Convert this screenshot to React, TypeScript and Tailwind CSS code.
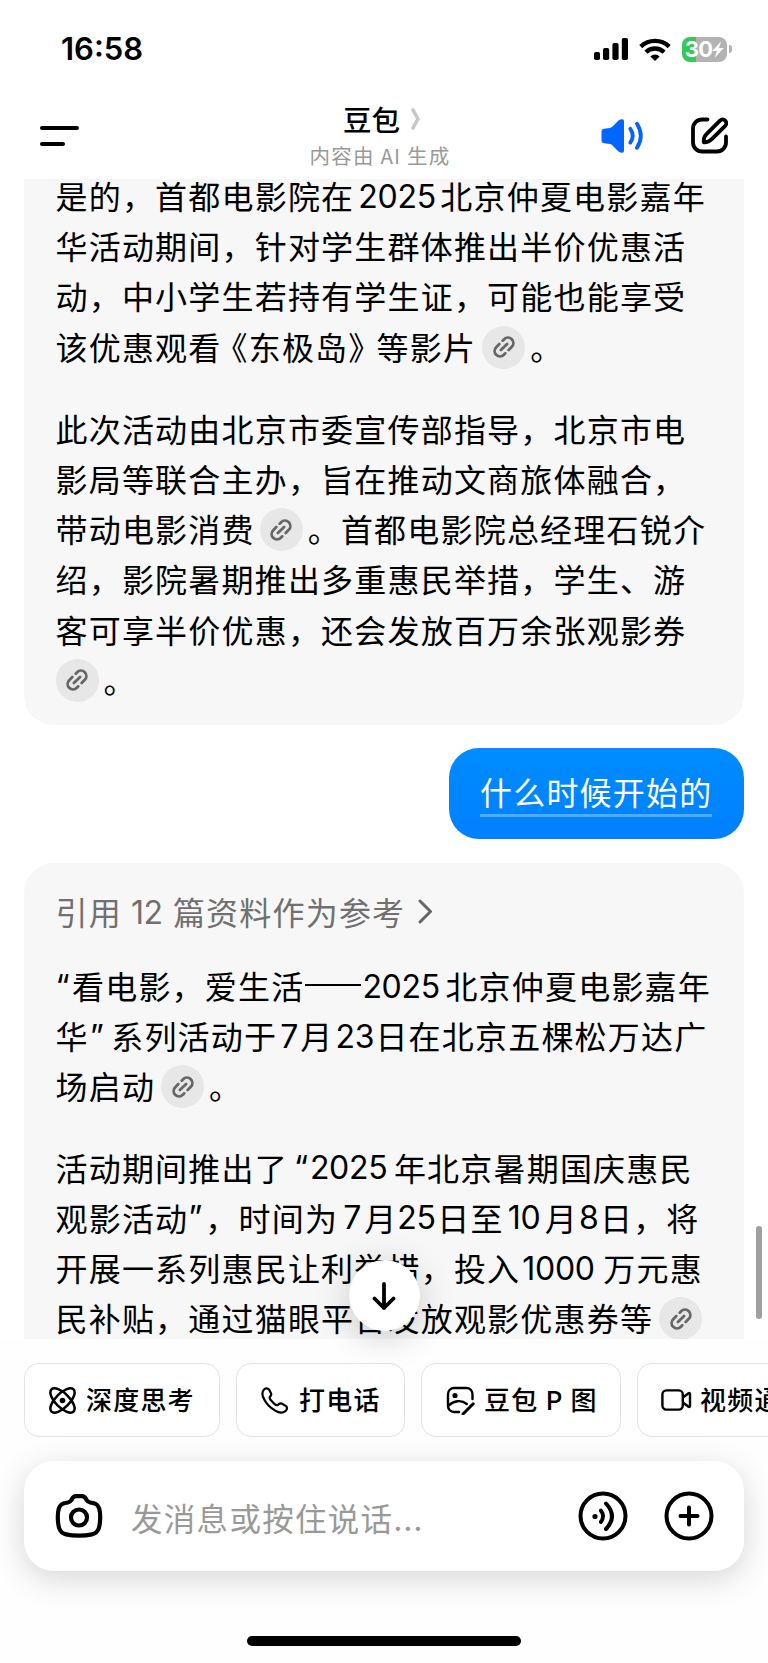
import React from 'react';

const LinkBadge: React.FC<{ className?: string }> = ({ className = '' }) => (
  <span className={`mt-[3px] inline-flex h-[43px] w-[43px] shrink-0 items-center justify-center rounded-full bg-[#e7e7e7] ${className}`}>
    <svg width="26" height="26" viewBox="-13 -13 26 26" fill="none" stroke="#666" strokeWidth="2.8" strokeLinecap="round">
      <g transform="rotate(-45)">
        <path d="M-3.6 5.4H-5.600A5.4 5.4 0 0 1 -5.600 -5.4H-1.2" />
        <path d="M3.6 -5.4H5.600A5.4 5.4 0 0 1 5.600 5.4H1.2" />
        <path d="M-4.4 0H4.4" />
      </g>
    </svg>
  </span>
);

const Num: React.FC<{ className: string; children: React.ReactNode }> = ({ className, children }) => (
  <span className={`mt-[3px] flex shrink-0 font-['Inter'] text-[32px] tracking-[-0.3px] ${className}`}>{children}</span>
);

const Line: React.FC<{ children: React.ReactNode }> = ({ children }) => (
  <div className="flex h-[50.2px] items-center whitespace-nowrap">{children}</div>
);

const Signal = () => (
  <svg width="34" height="22" viewBox="0 0 34 22">
    <rect x="0" y="14" width="6" height="8" rx="1.8" />
    <rect x="9" y="10" width="6.2" height="12" rx="1.8" />
    <rect x="18.4" y="5" width="6.2" height="17" rx="1.8" />
    <rect x="27.8" y="0" width="6.2" height="22" rx="1.8" />
  </svg>
);

const Wifi = () => (
  <svg width="32" height="23" viewBox="0 0 32 23" fill="none" stroke="#000" strokeWidth="4.4">
    <path d="M1.800 8.600a20.500 20.500 0 0 1 28.400 0" />
    <path d="M6.9 14.2a13.2 13.2 0 0 1 18.2 0" />
    <path d="M16 23l-4.6-4.6a6.6 6.6 0 0 1 9.2 0z" fill="#000" stroke="none" />
  </svg>
);

const Battery = () => (
  <div className="flex items-center gap-[2px]">
    <div className="flex h-[25px] w-[45px] items-center justify-center overflow-hidden rounded-[8px] bg-[linear-gradient(90deg,#34c759_31%,#b3b3b3_31%)] text-white">
      <span className="font-['Inter'] text-[22px] leading-none font-bold tracking-[-0.8px]">30</span>
      <svg width="12" height="17" viewBox="0 0 12 17" fill="#fff">
        <path d="M9.200 0.200L0.300 10H5L2.800 16.800L11.700 7H7z" />
      </svg>
    </div>
    <span className="h-[8px] w-[3px] rounded-r-full bg-[#b3b3b3]" />
  </div>
);

const ThinkIcon = () => (
  <svg width="27" height="27" viewBox="0 0 27 27" fill="none" stroke="#000" strokeWidth="2.5">
    <ellipse cx="13.5" cy="13.5" rx="15.600" ry="7" transform="rotate(45 13.5 13.5)" />
    <ellipse cx="13.5" cy="13.5" rx="15.600" ry="7" transform="rotate(-45 13.5 13.5)" />
    <circle cx="13.5" cy="13.5" r="2.8" fill="#000" stroke="none" />
  </svg>
);

const PhoneIcon = () => (
  <svg width="27" height="27" viewBox="0 0 27 27" fill="none" stroke="#000" strokeWidth="2.2" strokeLinejoin="round">
    <path d="M2.7 2.9C4.3 0.8 7 1 8.3 3L10 6.2c.8 1.6-.2 2.6-1 3.6-.7.9-.4 1.7.5 3l4.2 4.4c1.2 1 2.2 1.3 3.2.6l1.6-1.1c.8-.5 1.7-.4 2.6.1l3.6 2.1c2 1.3 1.5 3.8-.3 5.2-2.3 1.8-5.7 2.3-10.2-.5-5-3-8.7-6.6-11.2-11.7C1 8.300.8 5.300 2.7 2.9z" />
  </svg>
);

const PhotoIcon = () => (
  <svg width="29" height="29" viewBox="0 0 29 29" fill="none" stroke="#000" strokeWidth="2.4" strokeLinecap="round" strokeLinejoin="round">
    <path d="M13 26H8a6 6 0 0 1-6-6V8a6 6 0 0 1 6-6h12.500a6 6 0 0 1 6 6v5" />
    <path d="M2.300 20c5.500-5.500 13-6.500 18.500-2" />
    <circle cx="9" cy="9.500" r="2.600" fill="#000" stroke="none" />
    <path d="M27.200 17.800L17 28" strokeWidth="3" />
  </svg>
);

const VideoIcon = () => (
  <svg width="31" height="22" viewBox="0 0 31 22" fill="none" stroke="#000" strokeWidth="2.4" strokeLinejoin="round">
    <rect x="1.4" y="1.400" width="20.400" height="19.200" rx="4" />
    <path d="M22 8.500L27.500 4.300Q29 3.400 29 5v12q0 1.600-1.500.7L22 13.500" />
  </svg>
);

const chips = [
  { label: '深度思考', icon: <ThinkIcon />, box: 'w-[196px] pl-[24px]', gap: 'ml-[10px]' },
  { label: '打电话', icon: <PhoneIcon />, box: 'w-[169px] pl-[24px]', gap: 'ml-[11px]' },
  { label: '豆包 P 图', icon: <PhotoIcon />, box: 'w-[200px] pl-[24px]', gap: 'ml-[9px]' },
  { label: '视频通话', icon: <VideoIcon />, box: 'w-[196px] pl-[23px]', gap: 'ml-[8px]' },
];

const App: React.FC = () => {
  return (
    <div className="relative flex h-[1663px] w-[768px] flex-col overflow-hidden bg-white font-['Noto_Sans_CJK_SC',sans-serif] text-black">
      <div className="flex h-[98px] shrink-0 items-center justify-between pr-[36px] pl-[61px]">
        <span className="font-['Inter'] text-[31px] font-semibold">16:58</span>
        <div className="flex items-center gap-[11px]">
          <Signal />
          <Wifi />
          <Battery />
        </div>
      </div>

      <header className="grid h-[81px] shrink-0 grid-cols-[200px_1fr_200px]">
        <div className="flex flex-col gap-[12px] pt-[28px] pl-[40px]">
          <span className="h-[4px] w-[39px] rounded-full bg-black" />
          <span className="h-[4px] w-[25px] rounded-full bg-black" />
        </div>
        <div className="flex flex-col items-center pr-[8px]">
          <div className="flex h-[42px] items-center gap-[11px] pl-[3px]">
            <span className="text-[28.500px] leading-none font-medium">豆包</span>
            <svg width="9" height="22" viewBox="0 0 9 22" fill="none" stroke="#c8c8c8" strokeWidth="3.600" strokeLinecap="round" strokeLinejoin="round">
              <path d="M2 2l5 9-5 9" />
            </svg>
          </div>
          <span className="mt-[5px] text-[20.500px] leading-[20px] tracking-[1.2px] text-[#999]">内容由 AI 生成</span>
        </div>
        <div className="flex items-start justify-end gap-[48px] pt-[19px] pr-[40px]">
          <svg className="mt-[2px]" width="42" height="34" viewBox="0 0 42 34" fill="none" stroke="#0066ff" strokeWidth="3.800" strokeLinecap="round">
            <path d="M0.500 12.500q0-2.500 2.500-2.800l6-.8q1.500-.3 2.500-1.300l6-6q2-1.600 3.800-1.400 1.700.2 1.700 2v29.600q0 1.800-1.700 2-1.800.2-3.800-1.400l-6-6q-1-1-2.500-1.300l-6-.8q-2.500-.3-2.500-2.800z" fill="#0066ff" stroke="none" />
            <path d="M29.300 9.800q4.800 6.900 0 13.800" />
            <path d="M36 4.800q7.600 12 0 24" />
          </svg>
          <svg width="37" height="37" viewBox="0 0 37 37" fill="none" stroke="#000" strokeWidth="3.800" strokeLinecap="round" strokeLinejoin="round">
            <path d="M16.500 2.500H11A9 9 0 0 0 2 11.500v14a9 9 0 0 0 9 9h15a9 9 0 0 0 9-9v-6" />
            <path d="M12.800 25.300q-.6-4.800 2.700-8.100L29 3.600a3.600 3.600 0 0 1 5.200 5.200L20.800 22.200q-3.300 3.300-8 3.100z" />
          </svg>
        </div>
      </header>

      <main className="flex h-[1160px] shrink-0 flex-col overflow-hidden px-[24px] text-[32px] tracking-[1.2px]">
        <section className="-mt-[30px] flex h-[576px] shrink-0 flex-col gap-[32px] rounded-[30px] bg-[#f7f7f7] pt-[21px] pl-[31.500px]">
          <div>
            <Line>是的，首都电影院在<Num className="w-[86px] pl-[4px]">2025</Num>北京仲夏电影嘉年</Line>
            <Line>华活动期间，针对学生群体推出半价优惠活</Line>
            <Line>动，中小学生若持有学生证，可能也能享受</Line>
            <Line>
              该优惠观看<span className="-ml-[6px]">《</span>东极岛<span className="-mr-[5px]">》</span>等影片
              <LinkBadge className="mr-[5px] ml-[6px]" />。
            </Line>
          </div>
          <div>
            <Line>此次活动由北京市委宣传部指导，北京市电</Line>
            <Line>影局等联合主办，旨在推动文商旅体融合，</Line>
            <Line>带动电影消费<LinkBadge className="mr-[5px] ml-[5px]" />。首都电影院总经理石锐介</Line>
            <Line>绍，影院暑期推出多重惠民举措，学生、游</Line>
            <Line>客可享半价优惠，还会发放百万余张观影券</Line>
            <Line><LinkBadge className="mr-[5px]" />。</Line>
          </div>
        </section>

        <div className="mt-[23px] flex h-[91px] w-[295px] shrink-0 items-center self-end rounded-[30px] bg-linear-to-b from-[#008cff] to-[#0080ff] pl-[31px] text-white">
          <span className="h-[46px] border-b-[3px] border-[#55aaff] leading-[41px]">什么时候开始的</span>
        </div>

        <section className="mt-[24px] flex h-[560px] shrink-0 flex-col rounded-[30px] bg-[#f7f7f7] pt-[23px] pl-[31.500px]">
          <div className="flex h-[50px] items-center text-[#707070]">
            引用<Num className="w-[51px] pl-[9px]">12</Num>篇资料作为参考
            <svg className="ml-[12px]" width="17" height="25" viewBox="0 0 17 25" fill="none" stroke="#666" strokeWidth="3" strokeLinecap="round" strokeLinejoin="round">
              <path d="M3 2l10.500 10.500L3 23" />
            </svg>
          </div>
          <div className="mt-[24px]">
            <Line>
              <Num className="w-[16.500px]">“</Num>看电影，爱生活
              <span className="mx-[0.500px] h-[2.500px] w-[56px] bg-black" />
              <Num className="w-[84px] pl-[1px]">2025</Num>北京仲夏电影嘉年
            </Line>
            <Line>
              华<Num className="w-[22.500px] pl-[1px]">”</Num>系列活动于<Num className="w-[23px] pl-[3px]">7</Num>月
              <Num className="w-[42px] pl-[2px]">23</Num>日在北京五棵松万达广
            </Line>
            <Line>场启动<LinkBadge className="mr-[5px] ml-[6px]" />。</Line>
          </div>
          <div className="mt-[31px]">
            <Line>
              活动期间推出了<Num className="w-[22px] pl-[6px]">“</Num>
              <Num className="w-[84px]">2025</Num>年北京暑期国庆惠民
            </Line>
            <Line>
              观影活动<Num className="w-[17px]">”</Num>，时间为<Num className="w-[26px] pl-[5px]">7</Num>月
              <Num className="w-[40px]">25</Num>日至<Num className="w-[41px] pl-[4px]">10</Num>月<Num className="w-[22px] pl-[1px]">8</Num>日，将
            </Line>
            <Line>开展一系列惠民让利举措，投入<Num className="w-[83px] pl-[2px]">1000</Num>万元惠</Line>
            <Line>民补贴，通过猫眼平台发放观影优惠券等<LinkBadge className="ml-[6px]" /></Line>
          </div>
        </section>
      </main>

      <footer className="flex flex-1 flex-col bg-[#fefefe] px-[24px] pt-[24px]">
        <div className="flex shrink-0 gap-[16px] text-[26px] font-medium">
          {chips.map((chip) => (
            <button
              key={chip.label}
              className={`flex h-[74px] shrink-0 items-center rounded-[15px] border-[1.500px] border-[#e2e2e4] bg-white whitespace-nowrap ${chip.box}`}
            >
              {chip.icon}
              <span className={`pb-[3px] tracking-[1.2px] ${chip.gap}`}>{chip.label}</span>
            </button>
          ))}
        </div>

        <div className="mt-[24px] flex h-[110px] shrink-0 items-center rounded-[30px] bg-white pr-[30px] pl-[31px] shadow-[0_8px_32px_rgba(0,0,0,0.16)]">
          <svg width="48" height="44" viewBox="0 0 48 44" fill="none" stroke="#000" strokeWidth="4.200" strokeLinejoin="round">
            <path d="M17.500 4.200Q18.800 2.200 21.200 2.200h5.600q2.400 0 3.700 2l1.200 2q1.200 1.900 3.400 2.300l2.600.5q4.900.9 6.500 5.500 1 3.500 1 8.500 0 6.500-1.300 11-1.600 5.200-7 6.400-5.400 1.300-12.900 1.300t-12.900-1.300q-5.400-1.200-7-6.400Q2.800 29.500 2.800 23q0-5 1-8.500 1.600-4.600 6.500-5.500l2.600-.5q2.200-.4 3.400-2.300z" />
            <circle cx="24" cy="23.500" r="8" />
          </svg>
          <span className="ml-[28px] flex-1 pt-[3px] text-[31.500px] tracking-[1.3px] text-[#999]">发消息或按住说话...</span>
          <svg width="50" height="50" viewBox="0 0 50 50" fill="none" stroke="#000" strokeWidth="4" strokeLinecap="round">
            <circle cx="25" cy="25" r="22.500" />
            <circle cx="17" cy="25.500" r="2.600" fill="#000" stroke="none" />
            <path d="M22.800 19.500q4.500 5.500 0 11.500" strokeWidth="3.800" />
            <path d="M28 12.500q12 13 0 25.500" strokeWidth="4" />
          </svg>
          <svg className="ml-[36px]" width="50" height="50" viewBox="0 0 50 50" fill="none" stroke="#000" strokeWidth="4" strokeLinecap="round">
            <circle cx="25" cy="25" r="22.500" />
            <path d="M25 16.500v17M16.500 25h17" />
          </svg>
        </div>

        <div className="mt-[65px] h-[10px] w-[274px] shrink-0 self-center rounded-full bg-black" />
      </footer>

      <button className="absolute top-[1260px] left-[348.500px] flex h-[71px] w-[71px] items-center justify-center rounded-full bg-white shadow-[0_6px_36px_rgba(0,0,0,0.2)]">
        <svg width="24" height="28" viewBox="0 0 24 28" fill="none" stroke="#000" strokeWidth="3.800" strokeLinecap="round" strokeLinejoin="round">
          <path d="M12 2v24M2.500 16.500L12 26l9.500-9.500" />
        </svg>
      </button>
      <span className="absolute top-[1226px] left-[756px] h-[93px] w-[6px] rounded-full bg-[#a0a0a0]" />
    </div>
  );
};

export default App;
